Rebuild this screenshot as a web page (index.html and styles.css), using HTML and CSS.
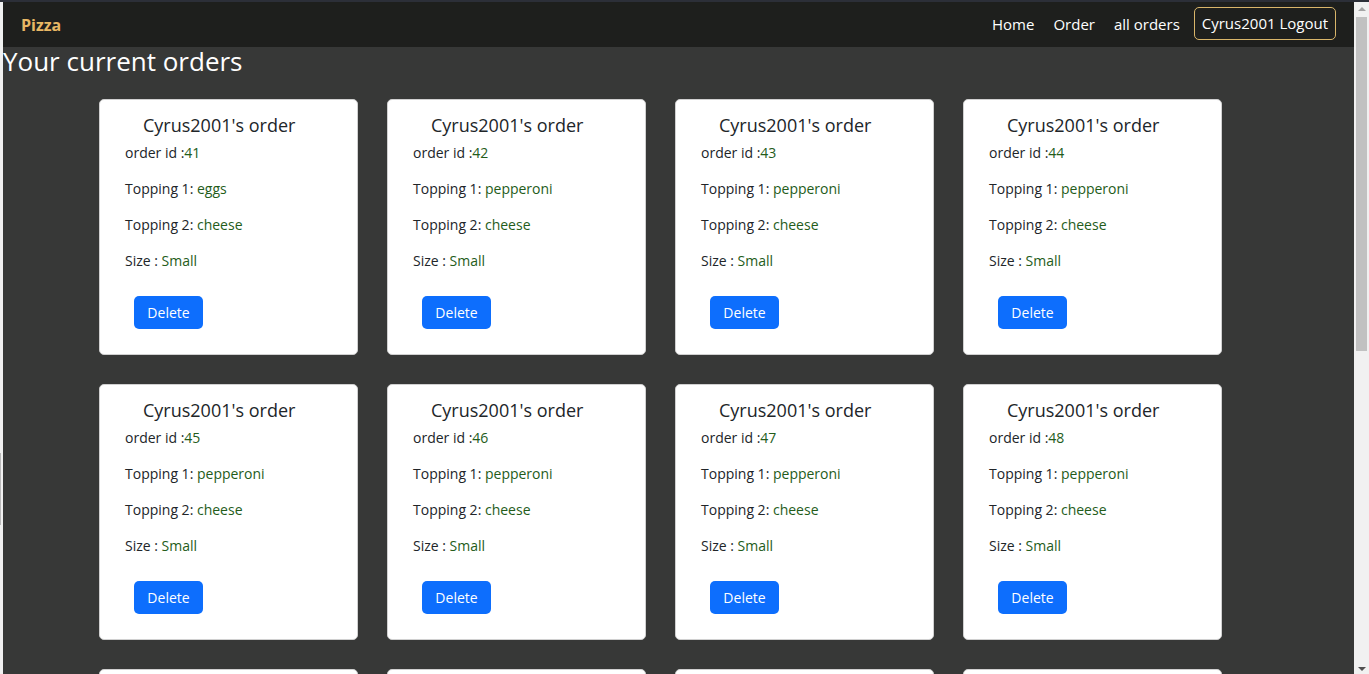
FILE: index.html
```html
<!DOCTYPE html>
<html lang="en">
<head>
<meta charset="utf-8">
<title>Pizza</title>
<link rel="stylesheet" href="styles.css">
</head>
<body>
<div class="frame">
  <div class="edge"><span class="edge-mark"></span></div>
  <div class="viewport">
    <nav class="navbar">
      <a class="brand" href="#">Pizza</a>
      <div class="nav-links">
        <a class="nav-link" href="#">Home</a>
        <a class="nav-link" href="#">Order</a>
        <a class="nav-link" href="#">all orders</a>
        <a class="nav-btn" href="#">Cyrus2001 Logout</a>
      </div>
    </nav>
    <h2 class="page-title">Your current orders</h2>
    <div class="grid">
      <div class="card"><div class="card-title">Cyrus2001's order</div><p class="line">order id :<span class="val">41</span></p><p class="line">Topping 1: <span class="val">eggs</span></p><p class="line">Topping 2: <span class="val">cheese</span></p><p class="line">Size : <span class="val">Small</span></p><button class="btn">Delete</button></div>
      <div class="card"><div class="card-title">Cyrus2001's order</div><p class="line">order id :<span class="val">42</span></p><p class="line">Topping 1: <span class="val">pepperoni</span></p><p class="line">Topping 2: <span class="val">cheese</span></p><p class="line">Size : <span class="val">Small</span></p><button class="btn">Delete</button></div>
      <div class="card"><div class="card-title">Cyrus2001's order</div><p class="line">order id :<span class="val">43</span></p><p class="line">Topping 1: <span class="val">pepperoni</span></p><p class="line">Topping 2: <span class="val">cheese</span></p><p class="line">Size : <span class="val">Small</span></p><button class="btn">Delete</button></div>
      <div class="card"><div class="card-title">Cyrus2001's order</div><p class="line">order id :<span class="val">44</span></p><p class="line">Topping 1: <span class="val">pepperoni</span></p><p class="line">Topping 2: <span class="val">cheese</span></p><p class="line">Size : <span class="val">Small</span></p><button class="btn">Delete</button></div>
      <div class="card"><div class="card-title">Cyrus2001's order</div><p class="line">order id :<span class="val">45</span></p><p class="line">Topping 1: <span class="val">pepperoni</span></p><p class="line">Topping 2: <span class="val">cheese</span></p><p class="line">Size : <span class="val">Small</span></p><button class="btn">Delete</button></div>
      <div class="card"><div class="card-title">Cyrus2001's order</div><p class="line">order id :<span class="val">46</span></p><p class="line">Topping 1: <span class="val">pepperoni</span></p><p class="line">Topping 2: <span class="val">cheese</span></p><p class="line">Size : <span class="val">Small</span></p><button class="btn">Delete</button></div>
      <div class="card"><div class="card-title">Cyrus2001's order</div><p class="line">order id :<span class="val">47</span></p><p class="line">Topping 1: <span class="val">pepperoni</span></p><p class="line">Topping 2: <span class="val">cheese</span></p><p class="line">Size : <span class="val">Small</span></p><button class="btn">Delete</button></div>
      <div class="card"><div class="card-title">Cyrus2001's order</div><p class="line">order id :<span class="val">48</span></p><p class="line">Topping 1: <span class="val">pepperoni</span></p><p class="line">Topping 2: <span class="val">cheese</span></p><p class="line">Size : <span class="val">Small</span></p><button class="btn">Delete</button></div>
      <div class="card"><div class="card-title">Cyrus2001's order</div><p class="line">order id :<span class="val">49</span></p><p class="line">Topping 1: <span class="val">pepperoni</span></p><p class="line">Topping 2: <span class="val">cheese</span></p><p class="line">Size : <span class="val">Small</span></p><button class="btn">Delete</button></div>
      <div class="card"><div class="card-title">Cyrus2001's order</div><p class="line">order id :<span class="val">50</span></p><p class="line">Topping 1: <span class="val">pepperoni</span></p><p class="line">Topping 2: <span class="val">cheese</span></p><p class="line">Size : <span class="val">Small</span></p><button class="btn">Delete</button></div>
      <div class="card"><div class="card-title">Cyrus2001's order</div><p class="line">order id :<span class="val">51</span></p><p class="line">Topping 1: <span class="val">pepperoni</span></p><p class="line">Topping 2: <span class="val">cheese</span></p><p class="line">Size : <span class="val">Small</span></p><button class="btn">Delete</button></div>
      <div class="card"><div class="card-title">Cyrus2001's order</div><p class="line">order id :<span class="val">52</span></p><p class="line">Topping 1: <span class="val">pepperoni</span></p><p class="line">Topping 2: <span class="val">cheese</span></p><p class="line">Size : <span class="val">Small</span></p><button class="btn">Delete</button></div>
    </div>
  </div>
  <div class="scrollbar">
    <div class="sb-btn"><span class="tri-up"></span></div>
    <div class="sb-track"><div class="sb-thumb"></div></div>
    <div class="sb-btn"><span class="tri-down"></span></div>
  </div>
</div>
</body>
</html>
```
FILE: styles.css
```css
html, body {
  margin: 0;
  padding: 0;
  height: 100%;
  overflow: hidden;
}
body {
  background: #f0f0f0;
  font-family: "Open Sans", "Liberation Sans", sans-serif;
}
.frame {
  height: 100%;
  box-sizing: border-box;
  border-top: 2px solid #2c2f38;
  display: flex;
}
.edge {
  width: 3px;
  flex: none;
  background: #f0f0f0;
  display: flex;
  flex-direction: column;
}
.edge-mark {
  display: block;
  margin-top: 451px;
  width: 1px;
  height: 72px;
  background: #b8b8b8;
}
.viewport {
  flex: 1;
  min-width: 0;
  height: 100%;
  overflow: hidden;
  background: #373837;
}
.scrollbar {
  width: 15px;
  flex: none;
  background: #f1f1f1;
  display: flex;
  flex-direction: column;
}
.sb-btn {
  height: 15px;
  flex: none;
  display: flex;
  align-items: center;
  justify-content: center;
}
.tri-up {
  width: 0;
  height: 0;
  border-left: 4px solid transparent;
  border-right: 4px solid transparent;
  border-bottom: 4px solid #a3a3a3;
  margin-top: -2px;
}
.tri-down {
  width: 0;
  height: 0;
  border-left: 4px solid transparent;
  border-right: 4px solid transparent;
  border-top: 4px solid #505050;
  margin-top: 4px;
}
.sb-track {
  flex: 1;
  padding: 0 2px;
}
.sb-thumb {
  height: 334px;
  background: #c1c1c1;
}
.navbar {
  height: 45px;
  background: #1e1f1d;
  display: flex;
  align-items: center;
  justify-content: space-between;
  padding: 0 18px;
}
.brand {
  color: #e8b865;
  font-weight: 700;
  font-size: 16px;
  text-decoration: none;
}
.nav-links {
  display: flex;
  align-items: center;
  gap: 19px;
}
.nav-link {
  color: #fff;
  font-size: 15px;
  text-decoration: none;
  margin-top: -2px;
}
.nav-btn {
  color: #fff;
  font-size: 15px;
  text-decoration: none;
  border: 1px solid #d9b56a;
  border-radius: 5px;
  padding: 5px 7px 6px;
  line-height: 20px;
  margin-top: -2px;
  margin-left: -5px;
}
.page-title {
  margin: 0;
  color: #fff;
  font-weight: 400;
  font-size: 26px;
  line-height: 28px;
}
.grid {
  display: grid;
  grid-template-columns: repeat(4, 259px);
  column-gap: 29px;
  row-gap: 29px;
  padding: 24px 0 30px 96px;
}
.card {
  background: #fff;
  border: 1px solid #d0d0d0;
  border-radius: 5px;
  height: 256px;
  box-sizing: border-box;
  padding: 14px 25px 0 25px;
}
.card-title {
  color: #212529;
  font-size: 18px;
  line-height: 22px;
  padding-left: 18px;
  margin-bottom: 6px;
}
.line {
  margin: 0 0 15px 0;
  font-size: 14px;
  line-height: 21px;
  color: #212529;
}
.val {
  color: #245c1a;
}
.btn {
  margin: 10px 0 0 9px;
  background: #0d6efd;
  color: #fff;
  border: none;
  border-radius: 5px;
  font-family: inherit;
  font-size: 14px;
  width: 69px;
  height: 33px;
  padding: 0;
}
```
